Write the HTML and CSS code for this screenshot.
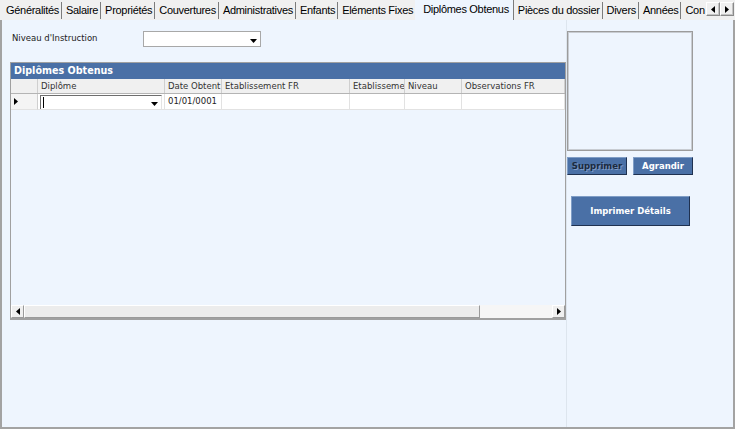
FILE: index.html
```html
<!DOCTYPE html>
<html lang="fr">
<head>
<meta charset="utf-8">
<title>Diplômes Obtenus</title>
<link rel="stylesheet" href="styles.css">
</head>
<body>
<div class="window">
  <div class="tabstrip">
    <div class="tabs">
      <span class="tab">Généralités</span>
      <span class="tab">Salaire</span>
      <span class="tab">Propriétés</span>
      <span class="tab">Couvertures</span>
      <span class="tab">Administratives</span>
      <span class="tab">Enfants</span>
      <span class="tab tab-before-active">Eléments Fixes</span>
      <span class="tab tab-active">Diplômes Obtenus</span>
      <span class="tab">Pièces du dossier</span>
      <span class="tab">Divers</span>
      <span class="tab">Années</span>
      <span class="tab tab-last">Con</span>
    </div>
    <div class="tab-scroll">
      <span class="scroll-btn"><svg width="4" height="7" viewBox="0 0 4 7"><polygon points="4,0 4,7 0,3.5" fill="#000"/></svg></span>
      <span class="scroll-btn"><svg width="4" height="7" viewBox="0 0 4 7"><polygon points="0,0 0,7 4,3.5" fill="#000"/></svg></span>
    </div>
  </div>

  <div class="panel">
    <div class="main">
      <div class="field">
        <span class="field-label">Niveau d'Instruction</span>
        <div class="combo">
          <span class="combo-text"></span>
          <span class="combo-btn"><svg width="7" height="4" viewBox="0 0 7 4"><polygon points="0,0 7,0 3.5,4" fill="#000"/></svg></span>
        </div>
      </div>

      <div class="grid">
        <div class="grid-caption">Diplômes Obtenus</div>
        <div class="grid-cols grid-head">
          <span class="cell rowhead"></span>
          <span class="cell">Diplôme</span>
          <span class="cell">Date Obtent</span>
          <span class="cell">Etablissement FR</span>
          <span class="cell">Etablisseme</span>
          <span class="cell">Niveau</span>
          <span class="cell">Observations FR</span>
        </div>
        <div class="grid-cols grid-row">
          <span class="cell rowhead"><svg width="4" height="7" viewBox="0 0 4 7"><polygon points="0,0 0,7 4,3.5" fill="#000"/></svg></span>
          <span class="cell cell-edit">
            <span class="combo combo-cell">
              <span class="caret"></span>
              <span class="combo-btn"><svg width="7" height="4" viewBox="0 0 7 4"><polygon points="0,0 7,0 3.5,4" fill="#000"/></svg></span>
            </span>
          </span>
          <span class="cell">01/01/0001</span>
          <span class="cell"></span>
          <span class="cell"></span>
          <span class="cell"></span>
          <span class="cell"></span>
        </div>
        <div class="grid-body"></div>
        <div class="hscroll">
          <span class="sb-btn"><svg width="4" height="7" viewBox="0 0 4 7"><polygon points="4,0 4,7 0,3.5" fill="#000"/></svg></span>
          <span class="sb-thumb"></span>
          <span class="sb-track"></span>
          <span class="sb-btn"><svg width="4" height="7" viewBox="0 0 4 7"><polygon points="0,0 0,7 4,3.5" fill="#000"/></svg></span>
        </div>
      </div>
    </div>

    <div class="side">
      <div class="photo"></div>
      <div class="photo-actions">
        <button class="btn btn-small btn-disabled">Supprimer</button>
        <button class="btn btn-small">Agrandir</button>
      </div>
      <button class="btn btn-print">Imprimer Détails</button>
    </div>
  </div>
</div>
</body>
</html>
```

FILE: styles.css
```css
* { box-sizing: border-box; }

html, body {
  margin: 0;
  padding: 0;
}

body {
  width: 735px;
  height: 429px;
  overflow: hidden;
  background: #f0f0f0;
  font-family: "DejaVu Sans", Verdana, sans-serif;
  color: #000;
}

.window {
  width: 735px;
  height: 429px;
  display: flex;
  flex-direction: column;
}

/* ---------- tab strip ---------- */
.tabstrip {
  position: relative;
  flex: none;
  height: 20px;
  background: #f0f0f0;
}

.tabs {
  display: flex;
  width: 706px;
  height: 20px;
  padding-left: 2px;
  overflow: hidden;
  font-family: "Liberation Sans", Arial, sans-serif;
  font-size: 11px;
  letter-spacing: -0.3px;
  white-space: nowrap;
}

.tab {
  flex: none;
  height: 17px;
  margin-top: 2px;
  padding: 0 2px 0 4px;
  border-right: 1px solid #7c7c7c;
  line-height: 17px;
}

.tab-before-active { border-right: none; }

.tab-active {
  margin-top: 0;
  height: 20px;
  padding: 0 4px 0 8px;
  background: #eef5fe;
  line-height: 18px;
}

.tab-last { border-right: none; }

.tab-scroll {
  position: absolute;
  right: 1px;
  top: 2px;
  display: flex;
  background: #f0f0f0;
}

.scroll-btn {
  width: 14px;
  height: 14px;
  display: flex;
  align-items: center;
  justify-content: center;
  background: #f0f0f0;
  border: 1px solid;
  border-color: #ffffff #8a8a8a #8a8a8a #ffffff;
  box-shadow: inset -1px -1px 0 #c4c4c4;
}

/* ---------- panel ---------- */
.panel {
  flex: 1;
  display: flex;
  background: #eef5fe;
  border-left: 2px solid #a3a3a3;
  border-right: 2px solid #a3a3a3;
  border-bottom: 2px solid #a3a3a3;
}

.main {
  flex: none;
  width: 564px;
  padding: 11px 0 0 8px;
}

.field {
  display: flex;
  height: 16px;
}

.field-label {
  width: 133px;
  padding: 2px 0 0 2px;
  font-size: 8.5px;
  color: #222;
}

.combo {
  position: relative;
  display: flex;
  width: 118px;
  height: 16px;
  background: #fff;
  border: 1px solid #a8a8a8;
}

.combo-text { flex: 1; }

.combo-btn {
  width: 13px;
  display: flex;
  align-items: flex-end;
  justify-content: center;
  padding-bottom: 3px;
}

/* ---------- grid ---------- */
.grid {
  display: flex;
  flex-direction: column;
  width: 556px;
  height: 258px;
  margin-top: 15px;
  border: 1px solid #a0a0a0;
  border-bottom: 2px solid #a0a0a0;
  font-size: 8.5px;
}

.grid-caption {
  height: 16px;
  padding-left: 3px;
  background: #4a70a6;
  color: #fff;
  font-weight: bold;
  font-size: 9.6px;
  line-height: 16px;
}

.grid-cols {
  display: grid;
  grid-template-columns: 27px 127px 57px 128px 55px 57px 103px;
}

.grid-head {
  height: 15px;
  background: #f0f0f0;
  border-bottom: 1px solid #b4b4b4;
  color: #333;
}

.grid-head .cell {
  padding-left: 3px;
  line-height: 14px;
  border-right: 1px solid #cfcfcf;
  white-space: nowrap;
  overflow: hidden;
}

.grid-row {
  height: 16px;
  background: #fff;
  color: #222;
}

.grid-row .cell {
  padding-left: 3px;
  line-height: 15px;
  border-right: 1px solid #e2e2e2;
  border-bottom: 1px solid #e2e2e2;
  white-space: nowrap;
  overflow: hidden;
}

.grid-row .rowhead {
  display: flex;
  align-items: center;
  background: #f4f4f4;
  border-right: 1px solid #cfcfcf;
}

.grid-row .cell-edit {
  padding: 1px 2px 0 2px;
}

.combo-cell {
  width: 122px;
  height: 15px;
  border: 1px solid;
  border-color: #6e6e6e #e4e4e4 #e4e4e4 #6e6e6e;
}

.caret {
  width: 1px;
  height: 11px;
  margin: 1px 0 0 2px;
  background: #000;
}

.combo-cell .caret + .combo-btn { margin-left: auto; }

.grid-body { flex: 1; }

.hscroll {
  display: flex;
  height: 13px;
  background: #f4f4f4;
}

.sb-btn {
  width: 13px;
  display: flex;
  align-items: center;
  justify-content: center;
  background: #efefef;
  border: 1px solid;
  border-color: #ffffff #9a9a9a #9a9a9a #ffffff;
}

.sb-thumb {
  width: 456px;
  background: #ececec;
  border: 1px solid;
  border-color: #ffffff #9a9a9a #9a9a9a #ffffff;
}

.sb-track {
  flex: 1;
  background: #f6f6f6;
}

/* ---------- side column ---------- */
.side {
  flex: 1;
  padding: 11px 0 0 0;
  border-left: 1px solid #dde5ee;
}

.photo {
  width: 126px;
  height: 120px;
  border: 1px solid #9c9c9c;
  box-shadow: inset 0 0 0 1px #c8ccd2;
}

.photo-actions {
  display: flex;
  gap: 6px;
  margin-top: 6px;
}

.btn {
  display: block;
  padding: 0;
  background: #4a70a6;
  border: 1px solid;
  border-color: #7f9dc6 #1f3150 #1f3150 #7f9dc6;
  color: #fff;
  font-family: "DejaVu Sans", Verdana, sans-serif;
  font-weight: bold;
  font-size: 8.5px;
  text-align: center;
}

.btn-small {
  width: 60px;
  height: 18px;
}

.btn-disabled {
  color: #1b2a40;
  text-shadow: 1px 1px 0 #7f9bc4;
}

.btn-print {
  width: 119px;
  height: 30px;
  margin: 21px 0 0 4px;
}
```
